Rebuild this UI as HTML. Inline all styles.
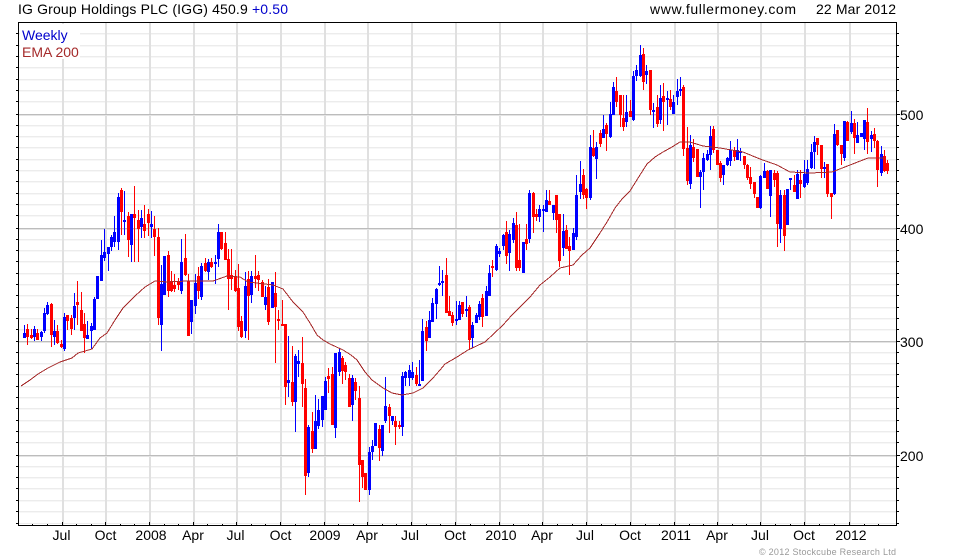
<!DOCTYPE html>
<html><head><meta charset="utf-8"><style>
html,body{margin:0;padding:0;background:#fff}
svg{display:block}
text{font-family:"Liberation Sans",Arial,sans-serif;font-size:14px;fill:#000}
</style></head><body>
<svg width="980" height="560" viewBox="0 0 980 560" xmlns="http://www.w3.org/2000/svg">
<g shape-rendering="crispEdges" fill="none">
<path stroke="#f7f7f7" d="M19 34.5H896M19 46.5H896M19 57.5H896M19 68.5H896M19 80.5H896M19 91.5H896M19 102.5H896M19 126.5H896M19 137.5H896M19 148.5H896M19 160.5H896M19 171.5H896M19 182.5H896M19 194.5H896M19 205.5H896M19 216.5H896M19 240.5H896M19 251.5H896M19 262.5H896M19 274.5H896M19 285.5H896M19 296.5H896M19 308.5H896M19 319.5H896M19 330.5H896M19 353.5H896M19 364.5H896M19 375.5H896M19 387.5H896M19 398.5H896M19 409.5H896M19 421.5H896M19 432.5H896M19 443.5H896M19 467.5H896M19 478.5H896M19 489.5H896M19 501.5H896M19 512.5H896"/>
<path stroke="#ececec" d="M19 33.5H896M19 45.5H896M19 56.5H896M19 67.5H896M19 79.5H896M19 90.5H896M19 101.5H896M19 125.5H896M19 136.5H896M19 147.5H896M19 159.5H896M19 170.5H896M19 181.5H896M19 193.5H896M19 204.5H896M19 215.5H896M19 239.5H896M19 250.5H896M19 261.5H896M19 273.5H896M19 284.5H896M19 295.5H896M19 307.5H896M19 318.5H896M19 329.5H896M19 352.5H896M19 363.5H896M19 374.5H896M19 386.5H896M19 397.5H896M19 408.5H896M19 420.5H896M19 431.5H896M19 442.5H896M19 466.5H896M19 477.5H896M19 488.5H896M19 500.5H896M19 511.5H896M19 523.5H896"/>
<path stroke="#e0e0e0" stroke-width="2" d="M63 23V525M106 23V525M150 23V525M194 23V525M237 23V525M281 23V525M325 23V525M368 23V525M412 23V525M456 23V525M500 23V525M543 23V525M587 23V525M631 23V525M675 23V525M718 23V525M761 23V525M805 23V525M850 23V525"/>
<path stroke="#e4e4e4" d="M19 115.5H896M19 229.5H896M19 342.5H896M19 456.5H896"/>
<path stroke="#bcbcbc" d="M19 114.5H896M19 228.5H896M19 341.5H896M19 455.5H896"/>
<rect x="20" y="24" width="60" height="35" fill="#fff" stroke="none"/>
</g>
<g shape-rendering="crispEdges" fill="none">
<path stroke="#0000ff" d="M24.5 325V338M34.5 326V341M41.5 331V341M44.5 308V333M47.5 302V315M54.5 320V345M64.5 313V351M74.5 293V330M87.5 321V339M91.5 323V349M94.5 297V330M97.5 276V299M101.5 240V281M104.5 229V261M108.5 247V271M111.5 235V251M114.5 216V247M118.5 193V250M124.5 191V235M131.5 214V262M141.5 210V238M151.5 211V238M161.5 265V351M164.5 256V295M181.5 239V294M191.5 300V334M195.5 274V314M201.5 263V300M208.5 259V280M215.5 255V284M218.5 224V267M245.5 272V338M251.5 271V303M265.5 286V310M272.5 282V308M288.5 336V397M295.5 354V432M298.5 350V377M308.5 425V477M315.5 395V449M318.5 399V429M322.5 396V427M325.5 377V410M335.5 353V438M339.5 349V376M352.5 375V421M369.5 447V495M372.5 440V460M375.5 423V446M382.5 425V456M385.5 377V423M392.5 416V425M402.5 372V436M405.5 371V386M409.5 365V386M412.5 362V380M419.5 360V386M422.5 319V381M429.5 311V338M432.5 298V322M436.5 288V319M439.5 266V286M442.5 270V296M456.5 301V325M459.5 301V320M466.5 296V317M472.5 322V348M476.5 313V323M479.5 301V320M486.5 286V316M489.5 265V296M496.5 244V271M499.5 248V257M503.5 234V250M509.5 230V271M513.5 218V243M523.5 242V273M529.5 190V243M539.5 205V222M543.5 205V232M546.5 190V212M553.5 205V220M563.5 214V256M573.5 228V250M576.5 175V240M580.5 161V199M590.5 135V200M596.5 142V179M603.5 115V138M610.5 102V138M613.5 82V115M626.5 95V127M633.5 71V121M636.5 65V81M640.5 45V77M646.5 65V84M653.5 103V128M660.5 85V124M667.5 91V125M673.5 95V114M677.5 79V105M680.5 77V96M690.5 135V189M700.5 170V208M703.5 153V190M707.5 150V161M710.5 126V170M723.5 165V185M727.5 157V166M730.5 141V166M737.5 139V160M740.5 148V161M760.5 175V209M764.5 163V178M770.5 170V217M780.5 190V243M787.5 189V225M790.5 178V190M797.5 170V199M804.5 160V188M807.5 160V185M811.5 144V169M814.5 136V169M824.5 162V178M834.5 124V195M844.5 121V161M851.5 111V134M857.5 122V143M861.5 133V137M864.5 120V150M871.5 131V152M881.5 146V176"/>
<path stroke="#0000ff" stroke-width="3" d="M24.5 333V338M34.5 329V337M41.5 332V337M44.5 313V331M47.5 305V314M54.5 331V337M64.5 317V349M74.5 306V318M87.5 335V339M91.5 326V331M94.5 299V330M97.5 276V299M101.5 255V281M104.5 252V258M108.5 247V254M111.5 237V247M114.5 232V242M118.5 197V242M124.5 220V222M131.5 214V245M141.5 218V227M151.5 224V227M161.5 284V325M164.5 256V295M181.5 262V291M191.5 300V322M195.5 283V306M201.5 266V297M208.5 262V272M215.5 262V264M218.5 232V259M245.5 286V331M251.5 276V295M265.5 297V305M272.5 282V308M288.5 380V383M295.5 356V402M298.5 361V364M308.5 427V473M315.5 421V449M318.5 410V426M322.5 396V420M325.5 381V410M335.5 353V428M339.5 352V372M352.5 378V405M369.5 452V490M372.5 446V452M375.5 423V446M382.5 425V451M385.5 406V421M392.5 416V421M402.5 376V427M405.5 372V378M409.5 370V378M412.5 372V378M419.5 384V386M422.5 331V381M429.5 320V338M432.5 303V322M436.5 289V304M439.5 283V285M442.5 281V283M456.5 319V321M459.5 305V320M466.5 309V311M472.5 325V338M476.5 315V323M479.5 304V317M486.5 291V316M489.5 273V296M496.5 246V270M499.5 251V254M503.5 235V246M509.5 234V253M513.5 223V240M523.5 242V273M529.5 193V239M539.5 209V217M543.5 209V211M546.5 200V212M553.5 205V213M563.5 231V248M573.5 233V250M576.5 195V237M580.5 184V192M590.5 147V198M596.5 147V159M603.5 129V138M610.5 114V137M613.5 87V115M626.5 112V122M633.5 76V120M636.5 70V76M640.5 55V76M646.5 71V75M653.5 110V112M660.5 98V120M667.5 98V100M673.5 102V114M677.5 91V97M680.5 89V91M690.5 145V184M700.5 172V177M703.5 158V172M707.5 154V160M710.5 136V155M723.5 165V175M727.5 158V165M730.5 150V161M737.5 150V160M740.5 151V153M760.5 176V208M764.5 171V178M770.5 170V196M780.5 195V229M787.5 189V225M790.5 178V180M797.5 174V199M804.5 174V187M807.5 169V183M811.5 152V168M814.5 142V152M824.5 167V169M834.5 134V194M844.5 121V158M851.5 123V132M857.5 135V143M861.5 133V137M864.5 120V139M871.5 135V139M881.5 154V173"/>
<path stroke="#ff0000" d="M27.5 324V345M31.5 329V339M37.5 329V340M51.5 303V347M57.5 325V344M61.5 340V348M67.5 315V330M71.5 315V335M77.5 281V325M81.5 292V331M84.5 313V353M121.5 188V235M128.5 212V257M134.5 186V262M138.5 210V262M144.5 205V238M148.5 209V236M154.5 216V256M158.5 228V325M168.5 251V297M171.5 271V292M174.5 274V292M178.5 278V290M185.5 234V276M188.5 274V336M198.5 267V299M205.5 258V272M211.5 258V268M221.5 232V250M225.5 232V260M228.5 249V310M231.5 249V290M235.5 270V292M238.5 264V331M241.5 316V338M248.5 271V340M255.5 255V288M258.5 271V291M262.5 280V297M268.5 279V325M275.5 272V363M278.5 310V330M282.5 300V326M285.5 324V405M292.5 346V406M302.5 337V407M305.5 379V495M312.5 412V453M328.5 368V393M332.5 367V425M342.5 356V384M345.5 362V380M349.5 374V407M355.5 378V400M359.5 386V502M362.5 460V488M365.5 473V490M379.5 425V461M389.5 404V433M395.5 416V445M399.5 421V429M416.5 367V386M426.5 321V351M446.5 258V313M449.5 296V316M452.5 312V326M462.5 302V317M469.5 305V350M482.5 294V327M492.5 260V277M506.5 221V264M516.5 212V271M519.5 224V271M526.5 224V250M533.5 192V233M536.5 209V221M549.5 190V205M556.5 195V233M559.5 214V267M566.5 225V249M569.5 237V275M583.5 169V199M586.5 188V209M593.5 130V157M600.5 130V147M606.5 123V151M616.5 77V107M620.5 95V127M623.5 95V131M630.5 100V117M643.5 48V90M650.5 70V115M657.5 95V127M663.5 83V131M670.5 90V110M683.5 85V156M687.5 127V185M693.5 139V162M697.5 149V177M713.5 126V153M717.5 150V165M720.5 161V182M734.5 147V161M744.5 156V169M747.5 164V180M750.5 167V189M754.5 182V198M757.5 197V208M767.5 170V189M774.5 170V187M777.5 171V247M784.5 190V251M794.5 175V192M800.5 170V198M817.5 138V155M821.5 145V178M827.5 164V197M831.5 193V219M837.5 130V146M841.5 145V165M847.5 121V141M854.5 119V154M867.5 108V154M874.5 128V148M877.5 140V187M884.5 150V172M887.5 160V174"/>
<path stroke="#ff0000" stroke-width="3" d="M27.5 329V337M31.5 335V338M37.5 333V340M51.5 304V335M57.5 331V343M61.5 344V347M67.5 315V321M71.5 318V329M77.5 302V305M81.5 310V331M84.5 324V338M121.5 190V212M128.5 216V240M134.5 214V218M138.5 220V229M144.5 224V231M148.5 214V223M154.5 229V237M158.5 237V318M168.5 255V291M171.5 281V291M174.5 285V289M178.5 282V285M185.5 258V275M188.5 281V336M198.5 276V291M205.5 263V271M211.5 262V267M221.5 232V249M225.5 243V260M228.5 259V279M231.5 275V279M235.5 276V291M238.5 288V327M241.5 321V337M248.5 279V296M255.5 276V279M258.5 275V280M262.5 282V297M268.5 287V322M275.5 293V307M278.5 319V321M282.5 324V326M285.5 324V387M292.5 382V402M302.5 363V384M305.5 388V476M312.5 431V449M328.5 376V379M332.5 374V425M342.5 358V371M345.5 365V372M349.5 378V407M355.5 382V391M359.5 398V465M362.5 460V477M365.5 473V490M379.5 429V448M389.5 407V416M395.5 421V427M399.5 425V427M416.5 375V384M426.5 327V341M446.5 275V313M449.5 311V316M452.5 315V323M462.5 302V314M469.5 307V340M482.5 298V317M492.5 266V268M506.5 232V256M516.5 225V268M519.5 260V268M526.5 239V244M533.5 193V217M536.5 214V217M549.5 201V205M556.5 195V220M559.5 214V261M566.5 230V249M569.5 246V251M583.5 175V195M586.5 189V198M593.5 148V156M600.5 133V144M606.5 125V134M616.5 91V102M620.5 95V115M623.5 118V127M630.5 111V117M643.5 54V82M650.5 70V110M657.5 107V124M663.5 96V102M670.5 99V107M683.5 87V149M687.5 148V181M693.5 147V158M697.5 149V177M713.5 129V150M717.5 150V165M720.5 163V178M734.5 150V157M744.5 156V165M747.5 165V178M750.5 177V184M754.5 182V194M757.5 197V208M767.5 171V189M774.5 173V180M777.5 173V224M784.5 195V236M794.5 185V192M800.5 180V184M817.5 138V145M821.5 145V169M827.5 164V194M831.5 193V197M837.5 130V145M841.5 145V154M847.5 122V141M854.5 123V138M867.5 122V142M874.5 134V141M877.5 141V170M884.5 156V171M887.5 163V171"/>
</g>
<polyline fill="none" stroke="#a52a2a" stroke-width="1" shape-rendering="crispEdges" points="21,386 30,380 38,374 48,368 60,362 72,358 78,353 85,351 92,349 100,338 107,333 115,320 123,308 129,302 135,296 145,287 155,281 167,282 187,281 213,281 227,276 240,277 248,282 273,285 283,289 293,302 303,312 310,323 317,335 323,340 330,344 343,350 351,355 357,360 365,372 372,380 383,388 392,393 402,395 413,393 423,388 433,378 440,370 445,364 457,357 468,350 485,342 503,325 512,315 520,307 530,297 540,285 550,277 560,268 573,265 582,255 590,248 600,233 607,222 615,208 622,199 630,191 640,175 647,164 655,157 663,152 672,147 680,142 690,142 703,146 720,148 743,152 760,159 777,165 790,172 810,173 832,172 850,165 868,158 885,158"/>
<g shape-rendering="crispEdges" fill="none" stroke="#000">
<path d="M18.5 22V525.5M18 22.5H897M896.5 22V525.5M18 525.5H897"/>
<path d="M16 33.5H18M16 45.5H18M16 56.5H18M16 67.5H18M16 79.5H18M16 90.5H18M16 101.5H18M16 114.5H18M16 125.5H18M16 136.5H18M16 147.5H18M16 159.5H18M16 170.5H18M16 181.5H18M16 193.5H18M16 204.5H18M16 215.5H18M16 228.5H18M16 239.5H18M16 250.5H18M16 261.5H18M16 273.5H18M16 284.5H18M16 295.5H18M16 307.5H18M16 318.5H18M16 329.5H18M16 341.5H18M16 352.5H18M16 363.5H18M16 374.5H18M16 386.5H18M16 397.5H18M16 408.5H18M16 420.5H18M16 431.5H18M16 442.5H18M16 455.5H18M16 466.5H18M16 477.5H18M16 488.5H18M16 500.5H18M16 511.5H18M16 523.5H18"/>
<path d="M897 33.5H899M897 45.5H899M897 56.5H899M897 67.5H899M897 79.5H899M897 90.5H899M897 101.5H899M897 114.5H900M897 125.5H899M897 136.5H899M897 147.5H899M897 159.5H899M897 170.5H899M897 181.5H899M897 193.5H899M897 204.5H899M897 215.5H899M897 228.5H900M897 239.5H899M897 250.5H899M897 261.5H899M897 273.5H899M897 284.5H899M897 295.5H899M897 307.5H899M897 318.5H899M897 329.5H899M897 341.5H900M897 352.5H899M897 363.5H899M897 374.5H899M897 386.5H899M897 397.5H899M897 408.5H899M897 420.5H899M897 431.5H899M897 442.5H899M897 455.5H900M897 466.5H899M897 477.5H899M897 488.5H899M897 500.5H899M897 511.5H899M897 523.5H899"/>
<path d="M62.5 522V525M105.5 522V525M149.5 522V525M193.5 522V525M236.5 522V525M280.5 522V525M324.5 522V525M367.5 522V525M411.5 522V525M455.5 522V525M499.5 522V525M542.5 522V525M586.5 522V525M630.5 522V525M674.5 522V525M717.5 522V525M760.5 522V525M804.5 522V525M849.5 522V525M32.5 524V525M47.5 524V525M76.5 524V525M91.5 524V525M120.5 524V525M134.5 524V525M164.5 524V525M178.5 524V525M207.5 524V525M222.5 524V525M251.5 524V525M265.5 524V525M295.5 524V525M309.5 524V525M338.5 524V525M353.5 524V525M382.5 524V525M396.5 524V525M426.5 524V525M440.5 524V525M470.5 524V525M484.5 524V525M513.5 524V525M528.5 524V525M557.5 524V525M572.5 524V525M601.5 524V525M615.5 524V525M645.5 524V525M659.5 524V525M689.5 524V525M703.5 524V525M732.5 524V525M746.5 524V525M775.5 524V525M790.5 524V525M819.5 524V525M834.5 524V525M864.5 524V525M878.5 524V525"/>
</g>
<text x="18" y="14" textLength="270" lengthAdjust="spacing">IG Group Holdings PLC (IGG) 450.9 <tspan fill="#0000cc">+0.50</tspan></text>
<text x="650" y="14" textLength="146" lengthAdjust="spacing">www.fullermoney.com</text>
<text x="816" y="14" textLength="80" lengthAdjust="spacing">22 Mar 2012</text>
<text x="22" y="40" fill="#0000cc" style="fill:#0000cc">Weekly</text>
<text x="22" y="57" style="fill:#a52a2a">EMA 200</text>
<g text-anchor="middle">
<text x="61.5" y="540">Jul</text><text x="105.5" y="540">Oct</text><text x="151" y="540">2008</text><text x="193" y="540">Apr</text><text x="235.5" y="540">Jul</text><text x="280.5" y="540">Oct</text><text x="325" y="540">2009</text><text x="367" y="540">Apr</text><text x="410" y="540">Jul</text><text x="455" y="540">Oct</text><text x="501" y="540">2010</text><text x="542" y="540">Apr</text><text x="585" y="540">Jul</text><text x="630" y="540">Oct</text><text x="676" y="540">2011</text><text x="717" y="540">Apr</text><text x="760" y="540">Jul</text><text x="804" y="540">Oct</text><text x="851" y="540">2012</text>
</g>
<text x="900" y="120">500</text><text x="900" y="234">400</text><text x="900" y="347">300</text><text x="900" y="461">200</text>
<text x="759" y="555" textLength="137" lengthAdjust="spacing" style="font-size:9px;fill:#999">© 2012 Stockcube Research Ltd</text>
</svg>
</body></html>
